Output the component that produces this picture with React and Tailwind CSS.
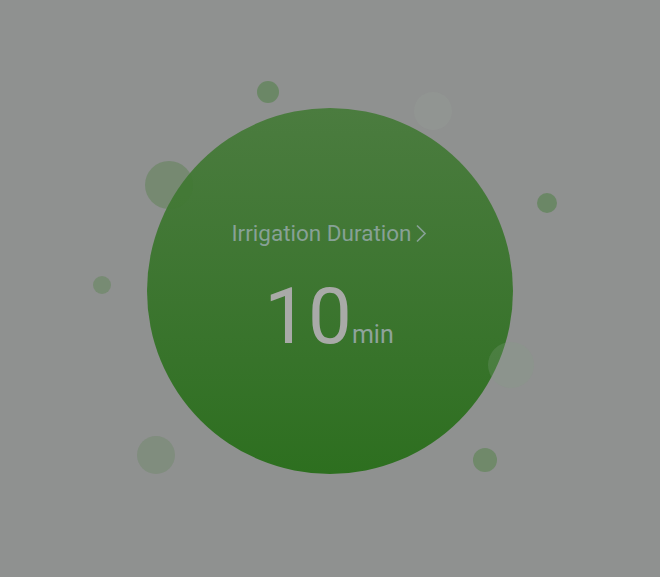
import React from "react";

const bubbles = [
  { x: 268, y: 92, r: 11, c: "bg-[rgba(65,125,50,0.45)]" },
  { x: 433, y: 111, r: 19, c: "bg-[rgba(160,175,160,0.15)]" },
  { x: 547, y: 203, r: 10, c: "bg-[rgba(65,125,50,0.45)]" },
  { x: 169, y: 185, r: 24, c: "bg-[rgba(65,120,50,0.32)]" },
  { x: 102, y: 285, r: 9, c: "bg-[rgba(65,125,50,0.3)]" },
  { x: 156, y: 455, r: 19, c: "bg-[rgba(70,125,55,0.2)]" },
  { x: 511, y: 365, r: 23, c: "bg-[rgba(130,160,130,0.25)]" },
  { x: 485, y: 460, r: 12, c: "bg-[rgba(65,125,50,0.4)]" },
];

export default function App() {
  return (
    <div className="relative w-[660px] h-[577px] overflow-hidden bg-[#8f9190] flex items-center justify-center" style={{ fontFamily: "Roboto, 'Noto Sans', sans-serif" }}>
      <div className="mt-[5px] w-[366px] h-[366px] rounded-full bg-gradient-to-b from-[#4b7c3f] to-[#2d6f1f] flex flex-col items-center pt-[112px]">
        <div className="flex items-center text-[22.5px] leading-[26px] text-[#87a196] -ml-[2px]">
          <span>Irrigation Duration</span>
          <svg width="12" height="19" viewBox="0 0 12 19" className="ml-[3px]" fill="none">
            <polyline points="2,1.5 10,9.5 2,17.5" stroke="#87a196" strokeWidth="1.7" />
          </svg>
        </div>
        <div className="flex items-baseline mt-[31px] -ml-[2px]">
          <span className="text-[78px] leading-[80px] text-[#a9aaa8]">10</span>
          <span className="text-[25px] leading-[25px] text-[#8fa39c]">min</span>
        </div>
      </div>
      {bubbles.map((b, i) => (
        <div
          key={i}
          className={`absolute rounded-full ${b.c}`}
          style={{ left: b.x - b.r, top: b.y - b.r, width: b.r * 2, height: b.r * 2 }}
        />
      ))}
    </div>
  );
}
